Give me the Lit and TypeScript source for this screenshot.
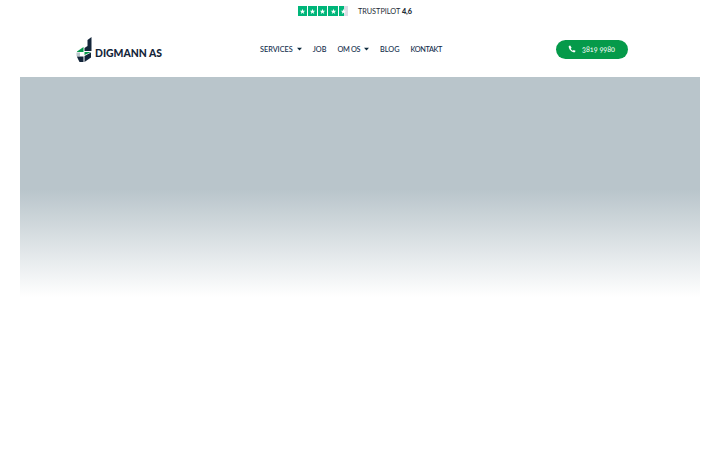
import { LitElement, html, css } from "lit";
import { customElement } from "lit/decorators.js";

const star = html`<svg class="star" viewBox="0 0 10 10"><path d="M5 1.2 6 4h3L6.6 5.7 7.5 8.6 5 6.9 2.5 8.6l.9-2.9L1 4h3z" fill="#fff"/></svg>`;
const caret = html`<svg class="caret" viewBox="0 0 6 4"><path d="M0 .5h6L3 3.7z" fill="#0e2a3d"/></svg>`;

@customElement("app-root")
export class AppRoot extends LitElement {
  static styles = css`
    :host { display: block; width: 720px; height: 450px; background: #fff; font-family: Lato, "Liberation Sans", sans-serif; color: #0e2a3d; overflow: hidden; }
    .top { height: 22px; display: flex; align-items: center; justify-content: center; gap: 10px; padding-right: 10px; box-sizing: border-box; }
    .stars { display: flex; gap: 1px; width: 50px; height: 10px; }
    .cell { width: 9.2px; height: 10px; background: #00b67a; display: flex; align-items: center; justify-content: center; }
    .cell.half { background: linear-gradient(90deg, #00b67a 50%, #dcdce6 50%); }
    .star { width: 7px; height: 7px; display: block; }
    .tp { font-size: 7.3px; color: #1c2b36; }
    .tp b { font-weight: 900; }
    .nav { height: 55px; padding: 0 92px 1px 76px; display: grid; grid-template-columns: 184px 1fr auto; align-items: center; box-sizing: border-box; }
    .logo { display: flex; align-items: center; gap: 2px; }
    .logo svg { width: 17px; height: 25px; display: block; }
    .name { font-size: 10.4px; font-weight: 900; color: #14263a; margin-top: 7px; }
    .links { display: flex; gap: 11px; align-items: center; font-size: 7.3px; font-weight: 500; color: #0e2a4a; }
    .item { display: flex; align-items: center; gap: 4px; }
    .tight { letter-spacing: -.35px; }
    .caret { width: 5px; height: 4px; }
    .btn { height: 19px; width: 72px; background: #059a4a; border-radius: 10px; color: #fff; font-size: 7.2px; display: flex; align-items: center; justify-content: center; gap: 6px; padding-right: 1px; box-sizing: border-box; font-variant-numeric: oldstyle-nums; }
    .btn svg { width: 8px; height: 8px; }
    .hero { margin: 0 20px; height: 220px; background: linear-gradient(180deg, #b9c5cb 0, #b9c5cb 113px, #fff 220px); }
  `;
  render() {
    return html`
      <div class="top">
        <div class="stars">
          <span class="cell">${star}</span><span class="cell">${star}</span><span class="cell">${star}</span><span class="cell">${star}</span><span class="cell half">${star}</span>
        </div>
        <span class="tp">TRUSTPILOT <b>4,6</b></span>
      </div>
      <div class="nav">
        <div class="logo">
          <svg viewBox="0 0 17 25">
            <path d="M11.5 3 15.5 0v14H8.5v-3l3-2z" fill="#14263a"/>
            <path d="M1 14.5 7.5 10V15H1z" fill="#059a4a"/>
            <path d="M.5 15.5H4v3.5H.5z" fill="#b9c5cb"/>
            <path d="M.8 19.5H7.5V25H3.5z" fill="#14263a"/>
            <path d="M8.5 15h6.5L8.5 18z" fill="#059a4a"/>
            <path d="M8.5 19l6.5-3.5v5L8.5 25z" fill="#14263a"/>
          </svg>
          <span class="name">DIGMANN AS</span>
        </div>
        <div class="links">
          <span class="item">SERVICES ${caret}</span>
          <span class="item">JOB</span>
          <span class="item"><span class="tight">OM OS</span> ${caret}</span>
          <span class="item">BLOG</span>
          <span class="item tight">KONTAKT</span>
        </div>
        <div class="btn">
          <svg viewBox="0 0 24 24"><path d="M6.6 1.5 2.2 3C1.5 13 11 22.5 21 21.8l1.5-4.4-5.5-2.6-2.4 2.6c-2.8-1.4-5-3.6-6.4-6.4l2.6-2.4z" fill="#fff"/></svg>
          <span>3819 9980</span>
        </div>
      </div>
      <div class="hero"></div>
    `;
  }
}
